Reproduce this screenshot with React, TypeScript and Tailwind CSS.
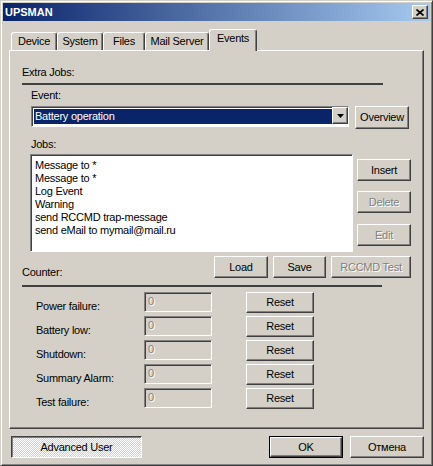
import React from 'react';

const raised =
  'border border-t-white border-l-white border-r-[#404040] border-b-[#404040] shadow-[inset_-1px_-1px_#808080]';
const sunken =
  'border border-t-[#808080] border-l-[#808080] border-r-white border-b-white shadow-[inset_1px_1px_#404040]';
const disabledText = 'text-[#808080] [text-shadow:1px_1px_0_#ffffff]';

interface BtnProps {
  label: string;
  className?: string;
  disabled?: boolean;
}

const Btn: React.FC<BtnProps> = ({ label, className = '', disabled }) => (
  <div
    className={`${raised} bg-[#d4d0c8] flex items-center justify-center shrink-0 ${
      disabled ? disabledText : ''
    } ${className}`}
  >
    {label}
  </div>
);

const tabs = ['Device', 'System', 'Files', 'Mail Server'];
const tabWidths = ['w-[46px]', 'w-[46px]', 'w-[42px]', 'w-[64px]'];

const jobs = [
  'Message to *',
  'Message to *',
  'Log Event',
  'Warning',
  'send RCCMD trap-message',
  'send eMail to mymail@mail.ru',
];

const counters = ['Power failure:', 'Battery low:', 'Shutdown:', 'Summary Alarm:', 'Test failure:'];

const App: React.FC = () => {
  return (
    <div className="w-[433px] h-[466px] bg-[#d4d0c8] border border-t-[#d4d0c8] border-l-[#d4d0c8] border-r-[#404040] border-b-[#404040] shadow-[inset_1px_1px_#ffffff,inset_-1px_-1px_#808080] p-[2px] flex flex-col font-['Liberation_Sans',Arial,sans-serif] text-[11px] leading-[13px] tracking-[-0.25px] text-black select-none">
      {/* title bar */}
      <div className="h-[18px] shrink-0 flex items-center justify-between pl-[2px] pr-[2px] bg-[linear-gradient(to_right,#0a246a,#a6caf0)]">
        <span className="text-white font-bold tracking-normal">UPSMAN</span>
        <div className={`${raised} bg-[#d4d0c8] w-[16px] h-[14px] flex items-center justify-center`}>
          <svg width="8" height="7" viewBox="0 0 8 7">
            <path d="M0.5 0.5 L7.5 6.5 M7.5 0.5 L0.5 6.5" stroke="#000" strokeWidth="1.7" />
          </svg>
        </div>
      </div>

      <div className="pl-[6px] pr-[6px] mt-[8px] flex flex-col">
        {/* tabs */}
        <div className="h-[21px] flex items-end pl-[2px] relative z-10">
          {tabs.map((t, i) => (
            <div
              key={t}
              className={`${tabWidths[i]} h-[18px] border-t border-l border-t-white border-l-white border-r border-r-[#404040] shadow-[inset_-1px_0_#808080] rounded-t-[3px] flex justify-center pt-[2px]`}
            >
              {t}
            </div>
          ))}
          <div className="w-[48px] h-[22px] -mb-[1px] bg-[#d4d0c8] border-t border-l border-t-white border-l-white border-r border-r-[#404040] shadow-[inset_-1px_0_#808080] rounded-t-[3px] flex justify-center pt-[2px]">
            Events
          </div>
        </div>

        {/* panel */}
        <div className="h-[379px] border border-t-white border-l-white border-r-[#404040] border-b-[#404040] shadow-[inset_-1px_-1px_#808080] pl-[12px] pt-[15px] flex flex-col">
          <div>Extra Jobs:</div>
          <div className="mt-[4px] w-[361px] h-[2px] bg-[#404040]" />

          <div className="pl-[9px] flex flex-col">
            <div className="mt-[4px]">Event:</div>
            <div className="mt-[4px] flex items-start gap-[6px]">
              <div className={`${sunken} bg-white w-[318px] h-[21px] flex p-[1px]`}>
                <div className="flex-1 ml-[1px] my-[1px] bg-[#0a246a] text-white pl-[1px] flex items-center">
                  Battery operation
                </div>
                <div className={`${raised} w-[16px] h-[17px] -mt-[1px] -mr-[1px] flex items-center justify-center bg-[#d4d0c8]`}>
                  <svg width="7" height="4" viewBox="0 0 7 4">
                    <polygon points="0,0 7,0 3.5,4" fill="#000" />
                  </svg>
                </div>
              </div>
              <Btn label="Overview" className="w-[54px] h-[23px]" />
            </div>

            <div className="mt-[9px]">Jobs:</div>
            <div className="mt-[3px] -ml-[1px] flex items-start gap-[4px]">
              <div className={`${sunken} bg-white w-[323px] h-[98px] pl-[4px] pt-[4px]`}>
                {jobs.map((j, i) => (
                  <div key={i}>{j}</div>
                ))}
              </div>
              <div className="flex flex-col mt-[5px]">
                <Btn label="Insert" className="w-[54px] h-[22px]" />
                <Btn label="Delete" disabled className="w-[54px] h-[22px] mt-[10px]" />
                <Btn label="Edit" disabled className="w-[54px] h-[22px] mt-[11px]" />
              </div>
            </div>
          </div>

          <div className="mt-[4px] flex items-end w-[389px]">
            <div className="flex-1 -mb-[1px]">Counter:</div>
            <Btn label="Load" className="w-[54px] h-[22px]" />
            <Btn label="Save" className="w-[53px] h-[22px] ml-[5px]" />
            <Btn label="RCCMD Test" disabled className="w-[80px] h-[22px] ml-[5px]" />
          </div>
          <div className="mt-[7px] w-[360px] h-[2px] bg-[#404040]" />

          <div className="mt-[5px] pl-[14px] flex flex-col gap-[4px]">
            {counters.map((c) => (
              <div key={c} className="flex items-start h-[20px]">
                <div className="w-[108px] pt-[8px]">{c}</div>
                <div className={`${sunken} bg-[#d4d0c8] w-[68px] h-[20px] pl-[3px] pt-[2px] ${disabledText}`}>0</div>
                <Btn label="Reset" className="w-[68px] h-[21px] ml-[34px]" />
              </div>
            ))}
          </div>
        </div>

        {/* bottom buttons */}
        <div className="mt-[7px] flex items-start pl-[2px]">
          <div className="w-[131px] h-[22px] border border-t-[#404040] border-l-[#404040] border-r-white border-b-white shadow-[inset_1px_1px_#808080] bg-[repeating-conic-gradient(#ffffff_0%_25%,#d4d0c8_0%_50%)] bg-[length:2px_2px] flex items-center justify-center">
            Advanced User
          </div>
          <div className="ml-auto w-[74px] h-[22px] border border-black">
            <Btn label="OK" className="w-full h-full" />
          </div>
          <Btn label="Отмена" className="w-[74px] h-[22px] ml-[7px]" />
        </div>
      </div>
    </div>
  );
};

export default App;
